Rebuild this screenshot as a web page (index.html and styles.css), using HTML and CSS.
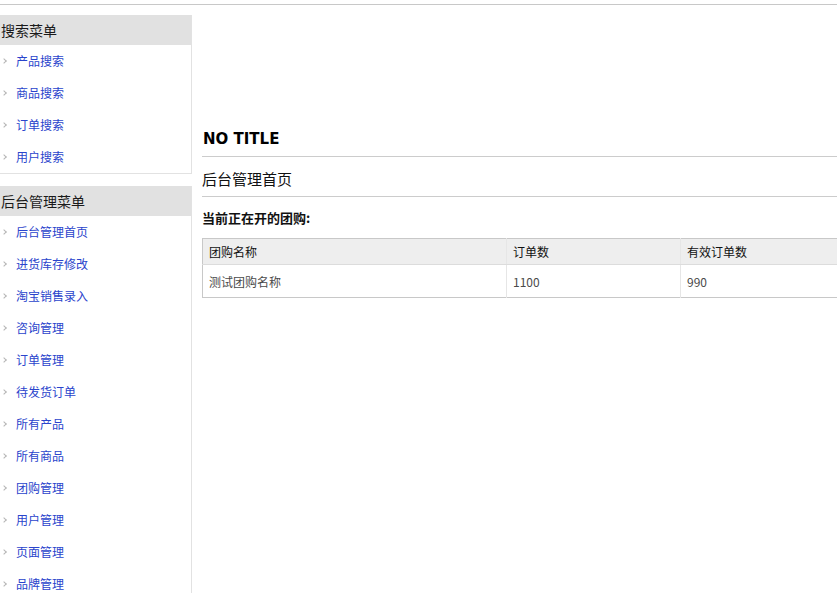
FILE: index.html
```html
<!DOCTYPE html>
<html lang="zh-CN">
<head>
<meta charset="utf-8">
<title>后台管理首页</title>
<link rel="stylesheet" href="styles.css">
</head>
<body>
<div class="topbar"></div>
<div class="layout">
  <aside class="sidebar">
    <section class="menu">
      <h3 class="menu-title">搜索菜单</h3>
      <ul class="menu-list">
        <li><a href="#">产品搜索</a></li>
        <li><a href="#">商品搜索</a></li>
        <li><a href="#">订单搜索</a></li>
        <li><a href="#">用户搜索</a></li>
      </ul>
    </section>
    <section class="menu menu-open">
      <h3 class="menu-title">后台管理菜单</h3>
      <ul class="menu-list">
        <li><a href="#">后台管理首页</a></li>
        <li><a href="#">进货库存修改</a></li>
        <li><a href="#">淘宝销售录入</a></li>
        <li><a href="#">咨询管理</a></li>
        <li><a href="#">订单管理</a></li>
        <li><a href="#">待发货订单</a></li>
        <li><a href="#">所有产品</a></li>
        <li><a href="#">所有商品</a></li>
        <li><a href="#">团购管理</a></li>
        <li><a href="#">用户管理</a></li>
        <li><a href="#">页面管理</a></li>
        <li><a href="#">品牌管理</a></li>
      </ul>
    </section>
  </aside>
  <main class="main">
    <h1 class="page-title">NO TITLE</h1>
    <h2 class="sub-title">后台管理首页</h2>
    <h3 class="section-title">当前正在开的团购:</h3>
    <table class="data-table">
      <thead>
        <tr><th class="c1">团购名称</th><th class="c2">订单数</th><th class="c3">有效订单数</th></tr>
      </thead>
      <tbody>
        <tr><td>测试团购名称</td><td>1100</td><td>990</td></tr>
      </tbody>
    </table>
  </main>
</div>
</body>
</html>
```
FILE: styles.css
```css
html, body {
  margin: 0;
  padding: 0;
  overflow: hidden;
  background: #fff;
}
body {
  font-family: "Noto Sans CJK SC", "DejaVu Sans", sans-serif;
  font-size: 12px;
  color: #333;
}
.topbar {
  height: 4px;
  border-bottom: 1px solid #c8c8c8;
}
.layout {
  display: flex;
  gap: 10px;
  padding-top: 10px;
  width: 870px;
}
.sidebar {
  width: 192px;
  flex: none;
}
.menu {
  border-right: 1px solid #e2e2e2;
  border-bottom: 1px solid #e2e2e2;
  margin-bottom: 12px;
}
.menu-open {
  border-bottom: none;
}
.menu-title {
  margin: 0;
  height: 30px;
  line-height: 30px;
  background: #e1e1e1;
  font-size: 14px;
  font-weight: normal;
  color: #1a1a1a;
  padding-left: 1px;
}
.menu-list {
  list-style: none;
  margin: 0;
  padding: 0;
}
.menu-list li {
  height: 32px;
  line-height: 32px;
  padding-left: 16px;
  position: relative;
}
.menu-list li::before {
  content: "";
  position: absolute;
  left: 2px;
  top: 14px;
  width: 3px;
  height: 3px;
  border-top: 1px solid #b5b5b5;
  border-right: 1px solid #b5b5b5;
  transform: rotate(45deg);
}
.menu-list a {
  color: #2a44cc;
  text-decoration: none;
  font-size: 12px;
}
.main {
  flex: none;
  width: 660px;
  padding-top: 114px;
}
.page-title {
  margin: 0;
  padding-left: 1px;
  font-family: "DejaVu Sans", sans-serif;
  font-size: 15px;
  font-weight: bold;
  line-height: 20px;
  color: #000;
  padding-bottom: 7px;
  border-bottom: 1px solid #cccccc;
}
.sub-title {
  margin: 12px 0 0;
  font-size: 15px;
  font-weight: normal;
  line-height: 20px;
  color: #111;
  padding-bottom: 7px;
  border-bottom: 1px solid #cccccc;
}
.section-title {
  margin: 11px 0 10px;
  font-size: 13px;
  font-weight: bold;
  line-height: 20px;
  color: #111;
}
.data-table {
  border-collapse: collapse;
  border: 1px solid #c8c8c8;
  width: 660px;
  font-size: 12px;
}
.data-table th,
.data-table td {
  text-align: left;
  padding: 0 6px;
  border-left: 1px solid #e6e6e6;
}
.data-table th {
  height: 25px;
  background: #eeeeee;
  font-weight: normal;
  color: #111;
  border-bottom: 1px solid #dcdcdc;
}
.data-table td {
  height: 32px;
  color: #4a4a4a;
}
.data-table .c1 { width: 291px; }
.data-table .c2 { width: 161px; }
.data-table td:first-child,
.data-table th:first-child { border-left: none; }
```
